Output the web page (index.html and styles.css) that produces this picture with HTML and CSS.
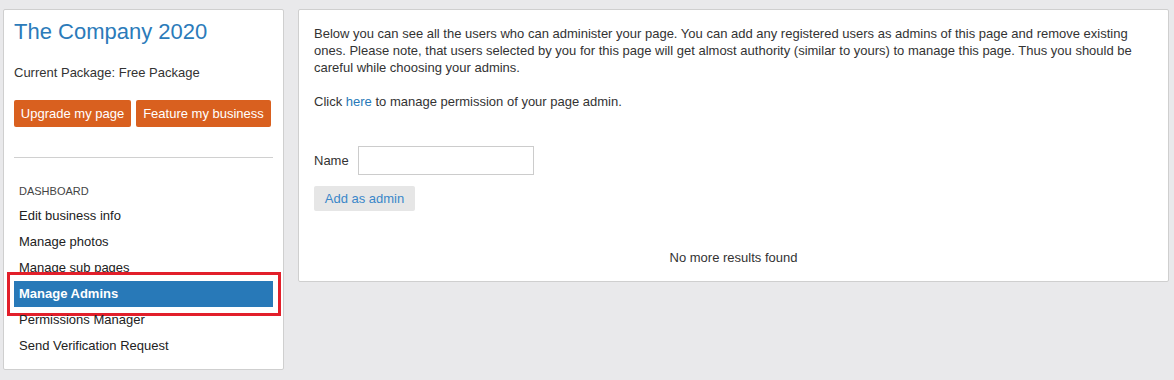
FILE: index.html
```html
<!DOCTYPE html>
<html lang="en">
<head>
    <meta charset="UTF-8">
    <meta name="viewport" content="width=device-width, initial-scale=1.0">
    <title>The Company 2020 - Manage Admins</title>
    <link rel="stylesheet" href="styles.css">
</head>
<body>
    <div class="page">
        <aside class="sidebar">
            <h1 class="company-name">The Company 2020</h1>
            <p class="package">Current Package: Free Package</p>
            <div class="actions">
                <a href="#" class="btn-orange btn-upgrade">Upgrade my page</a>
                <a href="#" class="btn-orange btn-feature">Feature my business</a>
            </div>
            <hr class="divider">
            <div class="menu-title">Dashboard</div>
            <ul class="menu">
                <li><a href="#">Edit business info</a></li>
                <li><a href="#">Manage photos</a></li>
                <li><a href="#">Manage sub pages</a></li>
                <li class="active"><a href="#">Manage Admins</a></li>
                <li><a href="#">Permissions Manager</a></li>
                <li><a href="#">Send Verification Request</a></li>
            </ul>
        </aside>

        <main class="content">
            <p class="intro">Below you can see all the users who can administer your page. You can add any registered users as admins of this page and remove existing ones. Please note, that users selected by you for this page will get almost authority (similar to yours) to manage this page. Thus you should be careful while choosing your admins.</p>
            <p class="intro">Click <a href="#">here</a> to manage permission of your page admin.</p>

            <form class="admin-form">
                <div class="field">
                    <label for="admin-name">Name</label>
                    <input type="text" id="admin-name">
                </div>
                <button type="button" class="btn-grey">Add as admin</button>
            </form>

            <div class="no-results">No more results found</div>
        </main>
    </div>
</body>
</html>
```

FILE: styles.css
```css
:root {
    --bg: #e9e9eb;
    --border: #cfcfcf;
    --blue: #2879b8;
    --orange: #d9601f;
    --text: #333;
    --annotate: #e21f2a;
}

* {
    margin: 0;
    padding: 0;
    box-sizing: border-box;
    font-family: 'Liberation Sans', Arial, sans-serif;
}

body {
    background-color: var(--bg);
    color: var(--text);
    font-size: 13px;
}

.page {
    display: flex;
    align-items: flex-start;
    gap: 14px;
    padding: 9px 5px 0 3px;
}

/* Sidebar */

.sidebar {
    width: 281px;
    flex-shrink: 0;
    background-color: white;
    border: 1px solid var(--border);
    border-radius: 2px;
    padding: 10px;
}

.company-name {
    font-size: 22px;
    font-weight: normal;
    line-height: 24px;
    color: #2b7bba;
}

.package {
    margin-top: 20px;
    line-height: 18px;
}

.actions {
    display: flex;
    gap: 5px;
    margin-top: 18px;
}

.btn-orange {
    display: block;
    flex-shrink: 0;
    height: 27px;
    line-height: 27px;
    background-color: var(--orange);
    color: white;
    text-align: center;
    text-decoration: none;
    white-space: nowrap;
    border-radius: 2px;
}

.btn-upgrade {
    width: 117px;
}

.btn-feature {
    width: 135px;
}

.divider {
    border: none;
    border-top: 1px solid #d0d0d0;
    margin-top: 30px;
}

.menu-title {
    margin-top: 25px;
    padding-left: 5px;
    font-size: 11px;
    line-height: 16px;
    text-transform: uppercase;
    color: #444;
}

.menu {
    list-style: none;
    margin-top: 4px;
}

.menu li {
    position: relative;
}

.menu a {
    display: block;
    height: 26px;
    line-height: 26px;
    padding-left: 5px;
    color: #222;
    text-decoration: none;
}

.menu .active a {
    background-color: var(--blue);
    color: white;
    font-weight: bold;
}

/* red highlight box round the current item */
.menu .active::after {
    content: '';
    position: absolute;
    top: -9px;
    bottom: -9px;
    left: -7px;
    right: -8px;
    border: 3px solid var(--annotate);
}

/* Content */

.content {
    flex-grow: 1;
    background-color: white;
    border: 1px solid var(--border);
    border-radius: 2px;
    padding: 15px;
}

.intro {
    line-height: 17px;
}

.intro + .intro {
    margin-top: 17px;
}

.intro a {
    color: var(--blue);
    text-decoration: none;
}

.admin-form {
    margin-top: 36px;
}

.field {
    display: flex;
    align-items: center;
    gap: 11px;
}

.field label {
    width: 33px;
}

.field input {
    width: 176px;
    height: 29px;
    border: 1px solid #ccc;
    padding: 0 6px;
    font-size: 13px;
}

.btn-grey {
    margin-top: 11px;
    width: 101px;
    height: 25px;
    border: none;
    border-radius: 2px;
    background-color: #e6e6e6;
    color: #3a87c9;
    font-size: 13px;
}

.no-results {
    margin-top: 38px;
    text-align: center;
    line-height: 17px;
}
```
